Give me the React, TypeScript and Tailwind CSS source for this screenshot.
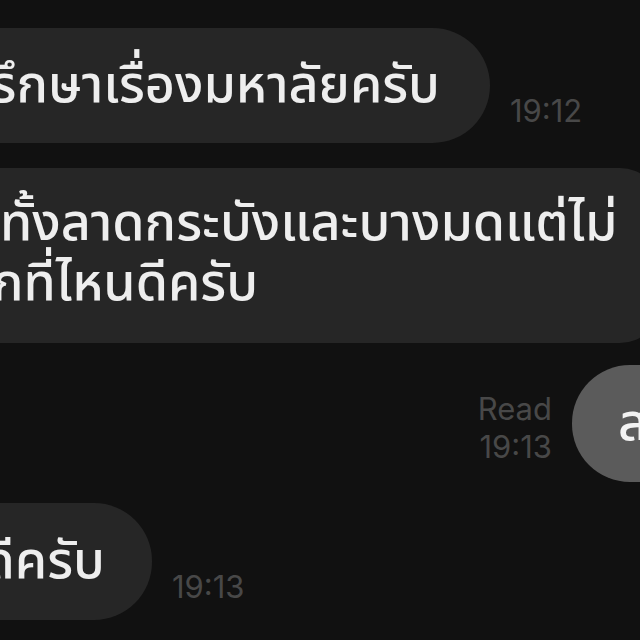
import React from "react";

const thai = { fontFamily: '"Noto Sans Thai", "Noto Sans", "Liberation Sans", sans-serif' };
const latin = { fontFamily: '"Inter", "Liberation Sans", sans-serif' };

export default function App() {
  return (
    <div className="w-[640px] h-[640px] bg-[#111111] overflow-hidden flex flex-col" style={thai}>
      {/* Row 1 */}
      <div className="mt-[28px] flex items-end gap-[20px]">
        <div className="w-[490px] h-[115px] shrink-0 bg-[#262626] rounded-r-[58px] overflow-hidden flex items-center justify-end pr-[50px]">
          <span className="whitespace-nowrap text-[52px] leading-none text-[#eeeeee] font-medium">ปรึกษาเรื่องมหาลัยครับ</span>
        </div>
        <span className="mb-[17px] text-[31px] leading-none text-[#484848]" style={latin}>19:12</span>
      </div>

      {/* Row 2 */}
      <div className="mt-[25px] h-[175px] w-[660px] shrink-0 bg-[#262626] rounded-r-[40px] overflow-hidden pt-[26px] flex flex-col">
        <div className="whitespace-nowrap text-[52px] leading-[60px] text-[#eeeeee] font-medium">ทั้งลาดกระบังและบางมดแต่ไม่</div>
        <div className="whitespace-nowrap text-[52px] leading-[60px] text-[#eeeeee] font-medium -ml-[8px]">กที่ไหนดีครับ</div>
      </div>

      {/* Row 3 */}
      <div className="mt-[22px] flex items-end justify-end gap-[20px]">
        <div className="mb-[16px] flex flex-col items-end text-[31px] leading-[38px] text-[#484848]" style={latin}>
          <span>Read</span>
          <span>19:13</span>
        </div>
        <div className="w-[68px] h-[117px] shrink-0 bg-[#5b5b5b] rounded-l-[58px] overflow-hidden flex items-center pl-[46px]">
          <span className="whitespace-nowrap text-[52px] leading-none text-[#f2f2f2] font-medium">สวัสดีครับ</span>
        </div>
      </div>

      {/* Row 4 */}
      <div className="mt-[21px] flex items-end gap-[20px]">
        <div className="w-[152px] h-[117px] shrink-0 bg-[#262626] rounded-r-[58px] overflow-hidden flex items-center justify-end pr-[47px]">
          <span className="whitespace-nowrap text-[52px] leading-none text-[#eeeeee] font-medium">ดีครับ</span>
        </div>
        <span className="mb-[18px] text-[31px] leading-none text-[#484848]" style={latin}>19:13</span>
      </div>
    </div>
  );
}
